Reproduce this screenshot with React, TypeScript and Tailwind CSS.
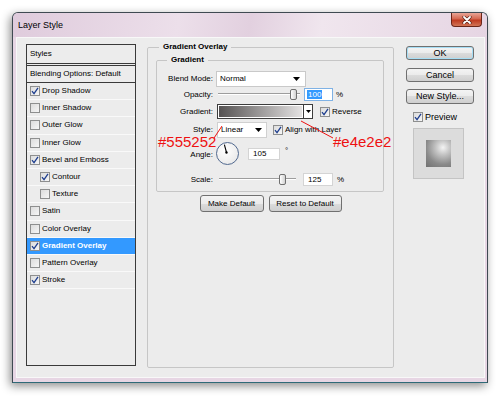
import React from 'react';

const Check = ({ checked }: { checked: boolean }) => (
  <span className="w-[10px] h-[10px] shrink-0 border border-[#8e8f8f] bg-[linear-gradient(135deg,#dcdcdc,#f6f6f6)] flex items-center justify-center">
    {checked && (
      <svg width="8" height="8" viewBox="0 0 8 8">
        <path d="M1 4.2 L3 6.6 L7 0.8" fill="none" stroke="#1f3f8f" strokeWidth="1.3" />
      </svg>
    )}
  </span>
);

const Arrow = () => (
  <svg width="7" height="4" viewBox="0 0 7 4" className="shrink-0">
    <polygon points="0,0 7,0 3.5,4" fill="#000" />
  </svg>
);

const Slider = ({ width, thumb }: { width: number; thumb: number }) => (
  <div className="relative h-[13px] shrink-0" style={{ width }}>
    <div className="absolute left-0 right-0 top-[5px] h-[2px] border-t border-[#9d9d9d] bg-white" />
    <div
      className="absolute top-[1px] w-[7px] h-[11px] rounded-[2px] border border-[#707070] bg-[linear-gradient(90deg,#ffffff,#d2d2d2)]"
      style={{ left: thumb }}
    />
  </div>
);

const styleItems: { label: string; checked: boolean; indent?: boolean; active?: boolean }[] = [
  { label: 'Drop Shadow', checked: true },
  { label: 'Inner Shadow', checked: false },
  { label: 'Outer Glow', checked: false },
  { label: 'Inner Glow', checked: false },
  { label: 'Bevel and Emboss', checked: true },
  { label: 'Contour', checked: true, indent: true },
  { label: 'Texture', checked: false, indent: true },
  { label: 'Satin', checked: false },
  { label: 'Color Overlay', checked: false },
  { label: 'Gradient Overlay', checked: true, active: true },
  { label: 'Pattern Overlay', checked: false },
  { label: 'Stroke', checked: true },
];

const btn =
  'flex items-center justify-center rounded-[3px] border border-[#707070] bg-[linear-gradient(#f4f4f4_0%,#ebebeb_50%,#dcdcdc_50%,#cfcfcf_100%)] leading-none text-black';

const App = () => {
  const angle = (105 * Math.PI) / 180;
  const nx = 11.5 + Math.cos(angle) * 9;
  const ny = 11.5 - Math.sin(angle) * 9;

  return (
    <div className="w-[500px] h-[399px] bg-white overflow-hidden font-['Liberation_Sans',Arial,sans-serif] text-black">
      <div className="ml-[12px] mt-[12px] w-[476px] h-[371px] flex flex-col border border-[#3f4a52] border-b-[#2e6a78] rounded-t-[6px] bg-[#e7d6e4] shadow-[-2px_3px_10px_rgba(0,0,0,0.45)]">
        {/* title bar */}
        <div className="h-[24px] flex items-start justify-between rounded-t-[5px] bg-[linear-gradient(100deg,#dfcbdc_0%,#ecdfea_35%,#e2d0df_50%,#f0e6ee_65%,#e6d5e3_100%)]">
          <span className="ml-[5px] mt-[7px] text-[9px] leading-[10px]">Layer Style</span>
          <div className="mr-[5px] w-[31px] h-[14px] flex items-center justify-center rounded-b-[4px] border border-t-0 border-[#6b2518] bg-[linear-gradient(#e9a597_0%,#d4674f_45%,#bf3a20_55%,#d27456_100%)]">
            <svg width="10" height="8" viewBox="0 0 10 8">
              <path d="M2 1 L8 7 M8 1 L2 7" stroke="#5a2318" strokeWidth="3.2" strokeLinecap="round" />
              <path d="M2 1 L8 7 M8 1 L2 7" stroke="#ffffff" strokeWidth="1.8" strokeLinecap="round" />
            </svg>
          </div>
        </div>

        {/* content */}
        <div className="relative ml-[3px] w-[469px] h-[341px] bg-[#ececec] border border-[#f8f8f8] flex items-start pl-[9px]">
          {/* styles list */}
          <div className="mt-[6px] w-[110px] h-[322px] border border-[#3a3a3a] text-[8px] leading-none">
            <div className="h-[19px] flex items-center pl-[3px] border-b border-[#3a3a3a]">Styles</div>
            <div className="mt-[1px] h-[18px] flex items-center pl-[3px] border-y border-[#3a3a3a]">
              Blending Options: Default
            </div>
            {styleItems.map((it) => (
              <div key={it.label} className="h-[17.2px] border-b border-[#f9f9f9]">
                <div
                  className={
                    it.active
                      ? 'h-full flex items-center gap-[2px] bg-[#3399ff] text-white font-bold ' + (it.indent ? 'pl-[13px]' : 'pl-[3px]')
                      : 'h-full flex items-center gap-[2px] ' + (it.indent ? 'pl-[13px]' : 'pl-[3px]')
                  }
                >
                  <Check checked={it.checked} />
                  <span>{it.label}</span>
                </div>
              </div>
            ))}
          </div>

          {/* gradient overlay group */}
          <fieldset className="mt-[4px] ml-[11px] w-[247px] h-[326px] border border-[#c6c6c6] rounded-[2px] p-0 m-0">
            <legend className="ml-[11px] px-[4px] font-bold text-[8px] leading-[10px]">Gradient Overlay</legend>
            <fieldset className="ml-[8px] mt-[3px] w-[228px] border border-[#c6c6c6] rounded-[2px] p-0 pb-[5px] text-[8px] leading-none">
              <legend className="ml-[10px] px-[4px] font-bold text-[8px] leading-[10px]">Gradient</legend>

              <div className="mt-[6px] h-[16px] flex items-center">
                <span className="w-[56px] text-right">Blend Mode:</span>
                <div className="ml-[3px] w-[90px] h-[16px] flex items-center justify-between pl-[3px] pr-[5px] bg-white border border-[#c9c9c9]">
                  <span>Normal</span>
                  <Arrow />
                </div>
              </div>

              <div className="mt-[1px] h-[13px] flex items-center">
                <span className="w-[56px] text-right">Opacity:</span>
                <div className="ml-[5px]">
                  <Slider width={82} thumb={72} />
                </div>
                <div className="ml-[4px] w-[29px] h-[13px] flex items-center pl-[2px] bg-white border border-[#7fb2e5]">
                  <span className="bg-[#3399ff] text-white px-[1px] leading-[9px]">100</span>
                </div>
                <span className="ml-[3px]">%</span>
              </div>

              <div className="mt-[3px] h-[15px] flex items-center">
                <span className="w-[56px] text-right">Gradient:</span>
                <div className="ml-[4px] w-[96px] h-[15px] flex border border-[#3c3c3c] bg-white">
                  <div className="flex-1 border border-white bg-[linear-gradient(90deg,#555252,#e4e2e2)]" />
                  <div className="w-[9px] flex items-center justify-center border-l border-[#3c3c3c]">
                    <svg width="5" height="3" viewBox="0 0 5 3">
                      <polygon points="0,0 5,0 2.5,3" fill="#000" />
                    </svg>
                  </div>
                </div>
                <div className="ml-[7px] flex items-center gap-[2px]">
                  <Check checked />
                  <span>Reverse</span>
                </div>
              </div>

              <div className="mt-[3px] h-[16px] flex items-center">
                <span className="w-[56px] text-right self-start mt-[4px]">Style:</span>
                <div className="ml-[4px] w-[50px] h-[16px] flex items-center justify-between pl-[3px] pr-[4px] bg-white border border-[#d0d0d0]">
                  <span>Linear</span>
                  <Arrow />
                </div>
                <div className="ml-[6px] flex items-center gap-[2px]">
                  <Check checked />
                  <span>Align with Layer</span>
                </div>
              </div>

              <div className="mt-[4px] h-[23px] flex items-center">
                <span className="w-[56px] text-right mt-[2px]">Angle:</span>
                <div className="ml-[3px] w-[23px] h-[23px] rounded-full border border-[#51698f] bg-[radial-gradient(circle_at_40%_35%,#ffffff,#e4e4e4)]">
                  <svg width="21" height="21" viewBox="0 0 23 23" className="-ml-px -mt-px">
                    <line x1="11.5" y1="11.5" x2={nx} y2={ny} stroke="#000" strokeWidth="1.2" />
                    <circle cx="11.5" cy="11.5" r="1.3" fill="#000" />
                  </svg>
                </div>
                <div className="ml-[9px] w-[32px] h-[12px] flex items-center pl-[4px] bg-white border border-[#d4d4d4]">105</div>
                <span className="ml-[5px] self-start mt-[5px]">°</span>
              </div>

              <div className="mt-[8px] h-[13px] flex items-center">
                <span className="w-[56px] text-right">Scale:</span>
                <div className="ml-[6px]">
                  <Slider width={77} thumb={60} />
                </div>
                <div className="ml-[7px] w-[30px] h-[13px] flex items-center pl-[4px] bg-white border border-[#d4d4d4]">125</div>
                <span className="ml-[4px]">%</span>
              </div>
            </fieldset>

            <div className="mt-[3px] flex justify-center gap-[5px] text-[8px]">
              <button className={btn + ' w-[64px] h-[17px]'}>Make Default</button>
              <button className={btn + ' w-[73px] h-[17px]'}>Reset to Default</button>
            </div>
          </fieldset>

          {/* right column */}
          <div className="mt-[8px] ml-[12px] w-[68px] flex flex-col items-center text-[9px]">
            <button className={btn + ' w-[68px] h-[14px] border-[#3c7fb1] shadow-[inset_0_0_0_1px_#a6def5]'}>OK</button>
            <button className={btn + ' mt-[8px] w-[68px] h-[14px]'}>Cancel</button>
            <button className={btn + ' mt-[7px] w-[68px] h-[15px]'}>New Style...</button>
            <div className="mt-[8px] -ml-[10px] flex items-center gap-[2px] leading-none">
              <Check checked />
              <span>Preview</span>
            </div>
            <div className="mt-[6px] -ml-[3px] w-[51px] h-[51px] border border-[#c4c4c4] bg-[#dcdcdc] flex items-center justify-center">
              <div className="w-[25px] h-[27px] bg-[radial-gradient(circle_at_68%_28%,#f4f4f4_0%,#c4c4c4_28%,#8a8a8a_65%,#707070_100%)]" />
            </div>
          </div>

          {/* annotations */}
          <span className="absolute left-[141px] top-[97px] text-[15px] leading-[14px] text-[#ee1111]">#555252</span>
          <span className="absolute left-[316px] top-[97px] text-[15px] leading-[14px] text-[#ee1111]">#e4e2e2</span>
          <svg className="absolute left-0 top-0 pointer-events-none" width="469" height="341">
            <line x1="205" y1="88" x2="197" y2="100" stroke="#ee1111" strokeWidth="1" />
            <line x1="284" y1="83" x2="316" y2="100" stroke="#ee1111" strokeWidth="1" />
          </svg>
        </div>
      </div>
    </div>
  );
};

export default App;
